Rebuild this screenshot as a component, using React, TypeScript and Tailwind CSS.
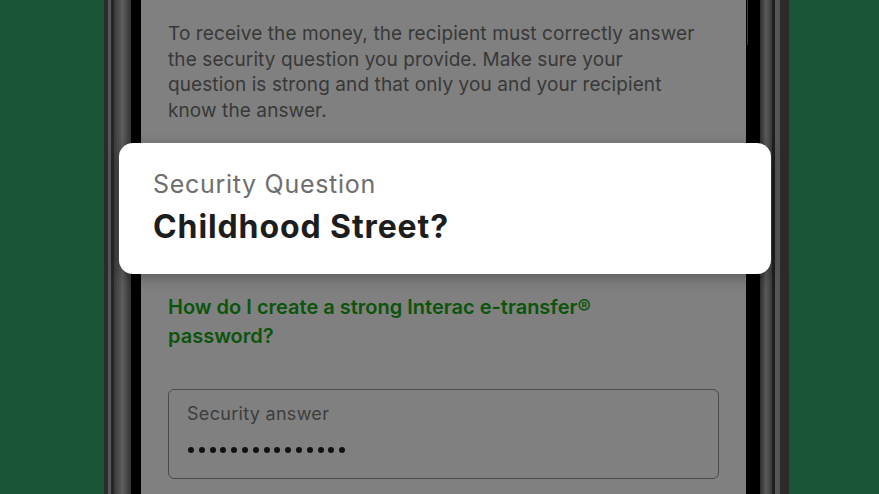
export default function App() {
  const dots = Array.from({ length: 15 });

  return (
    <div className="relative flex h-[494px] w-[879px] overflow-hidden bg-[#1b5538] font-['Inter',sans-serif]">
      {/* Phone frame */}
      <div className="ml-[104px] flex h-full">
        <div className="w-[4px] bg-[#2b2b2b]"></div>
        <div className="w-[3px] bg-[#575757]"></div>
        <div className="w-[3px] bg-[#262626]"></div>
        <div className="w-[17px] bg-gradient-to-r from-[#3a3a3a] via-[#5e5e5e] to-[#333]"></div>
        <div className="w-[10px] bg-black"></div>

        {/* Screen (dimmed) */}
        <div className="w-[605px] bg-[#808080] px-[27px] pt-[21px]">
          <p className="text-[19px] leading-[25.5px] tracking-[0.1px] text-[#383838]">
            To receive the money, the recipient must correctly answer<br />
            the security question you provide. Make sure your<br />
            question is strong and that only you and your recipient<br />
            know the answer.
          </p>

          <p className="mt-[170px] text-[20px] font-semibold leading-[29px] text-[#0b540b]">
            How do I create a strong Interac e-transfer®<br />
            password?
          </p>

          <div className="mt-[38px] h-[90px] rounded-[6px] border-[1.5px] border-[#4b4b4b] px-[18px] pt-[13px]">
            <div className="text-[18px] leading-[22px] tracking-[0.3px] text-[#3d3d3d]">Security answer</div>
            <div className="mt-[22px] flex gap-[4.8px] pl-[1px]">
              {dots.map((_, i) => (
                <span key={i} className="h-[6px] w-[6px] rounded-full bg-[#111]"></span>
              ))}
            </div>
          </div>
        </div>

        <div className="relative w-[14px] bg-black">
          <div className="absolute left-[1px] top-0 h-[45px] w-[1px] bg-[#2a3a6a]"></div>
        </div>
        <div className="w-[12px] bg-gradient-to-r from-[#2e2e2e] via-[#5a5a5a] to-[#3a3a3a]"></div>
        <div className="w-[3px] bg-[#1f1f1f]"></div>
        <div className="w-[5px] bg-[#555]"></div>
        <div className="w-[9px] bg-[#2b2b2b]"></div>
      </div>

      {/* Highlighted question card */}
      <div className="absolute left-[119px] top-[143px] h-[131px] w-[652px] rounded-[14px] bg-white pl-[34px] pt-[26px] shadow-[0_4px_14px_rgba(0,0,0,0.28)]">
        <div className="text-[25px] leading-[30px] tracking-[0.7px] text-[#6e6e6e]">Security Question</div>
        <div className="mt-[9px] text-[32px] font-bold leading-[38px] tracking-[0.9px] text-[#1d1d1d]">Childhood Street?</div>
      </div>
    </div>
  );
}
